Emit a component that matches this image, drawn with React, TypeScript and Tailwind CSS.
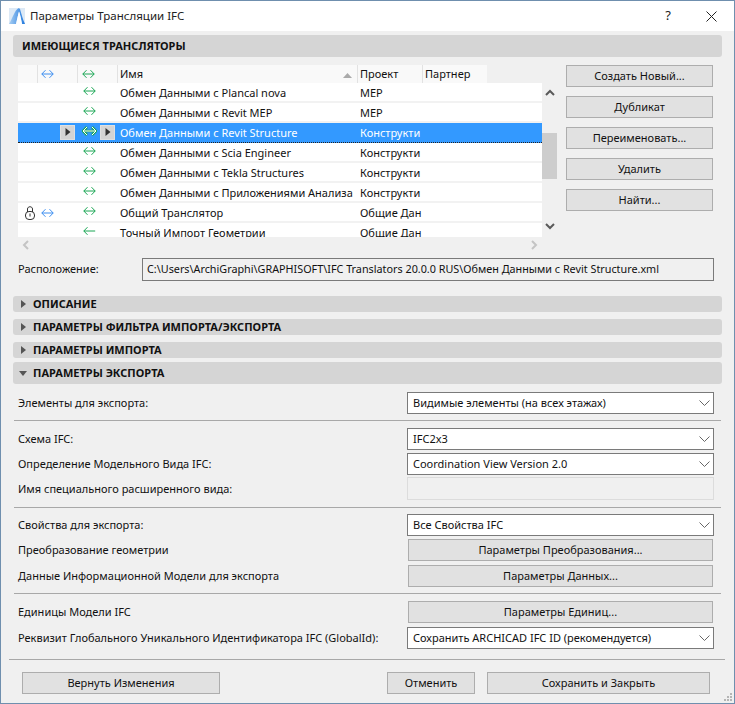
import React from "react";

const font = { fontFamily: '"Noto Sans", "Liberation Sans", sans-serif' };

function Arrow({ color, kind = "both" }: { color: string; kind?: "both" | "left" }) {
  return (
    <svg width="13" height="10" viewBox="0 0 13 10" fill="none" stroke={color} strokeWidth="1">
      {kind === "both" ? (
        <path d="M0.8 5H12.2M4.5 1.2L0.8 5L4.5 8.8M8.5 1.2L12.2 5L8.5 8.8" />
      ) : (
        <path d="M0.8 5H12.2M4.5 1.2L0.8 5L4.5 8.8" />
      )}
    </svg>
  );
}

function SelectedArrow() {
  return (
    <svg width="15" height="12" viewBox="0 0 15 12" fill="none">
      <path d="M1 6H14M5 2L1 6L5 10M10 2L14 6L10 10" stroke="#1aa654" strokeWidth="2.6" />
      <path d="M1 6H14M5 2L1 6L5 10M10 2L14 6L10 10" stroke="#ffffff" strokeWidth="1" />
    </svg>
  );
}

function Lock() {
  return (
    <svg width="10" height="14" viewBox="0 0 10 14" fill="none" stroke="#333" strokeWidth="1">
      <path d="M2.5 6V3C2.5 0 7.5 0 7.5 3V6" />
      <rect x="0.5" y="5.5" width="9" height="8" rx="3.5" />
      <path d="M5 7.5V10.5" />
    </svg>
  );
}

function Play() {
  return (
    <div className="w-[15px] h-[15px] border border-[#e0e0e0] bg-[#d4d4d4] flex items-center justify-center">
      <svg width="6" height="8" viewBox="0 0 6 8"><path d="M0.5 0L5.5 4L0.5 8Z" fill="#333" /></svg>
    </div>
  );
}

function Chevron({ dir }: { dir: "up" | "down" | "left" | "right" }) {
  const d = {
    up: "M1 6L5 2L9 6",
    down: "M1 2L5 6L9 2",
    left: "M6 1L2 5L6 9",
    right: "M2 1L6 5L2 9",
  }[dir];
  const light = dir === "left" || dir === "right";
  return (
    <svg width={light ? 8 : 10} height={light ? 10 : 8} viewBox={light ? "0 0 8 10" : "0 0 10 8"} fill="none" stroke={light ? "#c4c4c4" : "#5a5a5a"} strokeWidth="2">
      <path d={d} />
    </svg>
  );
}

function Btn({ children, className = "" }: { children: React.ReactNode; className?: string }) {
  return (
    <div className={`border border-[#adadad] bg-[#e1e1e1] flex items-center justify-center text-[11px] text-[#111] ${className}`}>
      {children}
    </div>
  );
}

function Select({ value, className = "" }: { value: string; className?: string }) {
  return (
    <div className={`h-[22px] w-[307px] border border-[#7a7a7a] bg-white flex items-center justify-between pl-[5px] pr-[3px] text-[11px] text-[#111] ${className}`}>
      <span>{value}</span>
      <svg width="11" height="6" viewBox="0 0 11 6" fill="none" stroke="#666" strokeWidth="1"><path d="M0.5 0.5L5.5 5.5L10.5 0.5" /></svg>
    </div>
  );
}

function Section({ title, open = false, big = false, className = "" }: { title: string; open?: boolean; big?: boolean; className?: string }) {
  return (
    <div className={`mx-[12px] bg-[#d5d5d5] rounded-[3px] flex items-center font-bold text-[11px] text-[#111] ${big ? "h-[22px]" : "h-[16px]"} ${className}`}>
      <span className="w-[20px] flex justify-center shrink-0">
        {open ? (
          <svg width="8" height="5" viewBox="0 0 8 5"><path d="M0 0H8L4 5Z" fill="#555" /></svg>
        ) : (
          <svg width="5" height="8" viewBox="0 0 5 8"><path d="M0 0L5 4L0 8Z" fill="#555" /></svg>
        )}
      </span>
      {title}
    </div>
  );
}

function Divider({ className = "" }: { className?: string }) {
  return <div className={`h-px bg-[#a8a8a8] ${className}`} />;
}

const GREEN = "#1aa654";
const BLUE = "#3d8ef0";

const rows = [
  { name: "Обмен Данными с Plancal nova", project: "MEP" },
  { name: "Обмен Данными с Revit MEP", project: "MEP" },
  { name: "Обмен Данными с Revit Structure", project: "Конструкти", selected: true },
  { name: "Обмен Данными с Scia Engineer", project: "Конструкти" },
  { name: "Обмен Данными с Tekla Structures", project: "Конструкти" },
  { name: "Обмен Данными с Приложениями Анализа", project: "Конструкти" },
  { name: "Общий Транслятор", project: "Общие Дан", lock: true },
  { name: "Точный Импорт Геометрии", project: "Общие Дан", left: true },
];

function Row({ r }: { r: (typeof rows)[number] }) {
  return (
    <div
      className={`h-[20px] shrink-0 flex items-center text-[11px] ${
        r.selected
          ? "bg-[#3399ff] text-white pt-[1px] border-b border-dotted border-[#222]"
          : "bg-white text-[#111] pt-[2px] border-b-2 border-[#f2f2f2]"
      }`}
    >
      <span className="w-[20px] flex justify-end pr-[3px]">{r.lock && <Lock />}</span>
      <span className="w-[40px] flex items-center pl-[3px]">
        {r.lock && <Arrow color={BLUE} />}
        {r.selected && <span className="ml-[19px] -translate-y-[1px] block"><Play /></span>}
      </span>
      <span className="w-[20px] flex justify-center -translate-y-[2px] ml-[1px]">
        {r.selected ? <SelectedArrow /> : <Arrow color={GREEN} kind={r.left ? "left" : "both"} />}
      </span>
      <span className="w-[21px] flex justify-start pl-[1px] -translate-y-[1px]">{r.selected && <Play />}</span>
      <span className="w-[238px] whitespace-nowrap">{r.name}</span>
      <span className="w-[184px] pl-[2px] whitespace-nowrap">{r.project}</span>
    </div>
  );
}

function TranslatorList() {
  return (
    <div className="w-[540px] shrink-0 flex flex-col">
      <div className="flex h-[172px]">
        <div className="w-[524px] flex flex-col overflow-hidden">
          <div className="h-[18px] shrink-0 flex text-[11px] text-[#111]">
            <div className="w-[20px] bg-[#f9f9f9] border-r border-[#e2e2e2]" />
            <div className="w-[40px] bg-[#f9f9f9] border-r border-[#e2e2e2] flex items-center pl-[3px]"><Arrow color={BLUE} /></div>
            <div className="w-[40px] bg-[#f9f9f9] border-r border-[#e2e2e2] flex items-center pl-[4px]"><Arrow color={GREEN} /></div>
            <div className="w-[240px] bg-[#f9f9f9] border-r border-[#e2e2e2] flex items-center justify-between pl-[2px] pr-[5px]">
              <span>Имя</span>
              <svg width="9" height="5" viewBox="0 0 9 5" className="mt-[3px]"><path d="M0 5L4.5 0L9 5Z" fill="#aaa" /></svg>
            </div>
            <div className="w-[65px] bg-[#f9f9f9] border-r border-[#e2e2e2] flex items-center pl-[2px]">Проект</div>
            <div className="w-[64px] bg-[#f9f9f9] flex items-center pl-[2px]">Партнер</div>
          </div>
          {rows.map((r) => (
            <Row key={r.name} r={r} />
          ))}
        </div>
        <div className="w-[15px] flex flex-col items-center justify-between pt-[24px] pb-[7px] relative">
          <Chevron dir="up" />
          <div className="absolute left-0 top-[68px] w-[15px] h-[46px] bg-[#cdcdcd]" />
          <Chevron dir="down" />
        </div>
      </div>
      <div className="h-[15px] w-[524px] flex items-center justify-between px-[4px]">
        <Chevron dir="left" />
        <Chevron dir="right" />
      </div>
    </div>
  );
}

function FormRow({ label, children, className = "" }: { label: string; children: React.ReactNode; className?: string }) {
  return (
    <div className={`flex items-center justify-between pl-[17px] pr-[20px] text-[11px] text-[#111] ${className}`}>
      <span className="whitespace-nowrap">{label}</span>
      {children}
    </div>
  );
}

export default function App() {
  return (
    <div style={font} className="w-[735px] h-[704px] border border-[#6f8fae] bg-[#f0f0f0] flex flex-col overflow-hidden relative">
      <div className="h-[30px] bg-white flex items-center shrink-0">
        <svg width="16" height="16" viewBox="0 0 16 16" className="ml-[8px]">
          <defs>
            <linearGradient id="lg" x1="0" y1="0" x2="1" y2="0">
              <stop offset="0" stopColor="#a9cff3" />
              <stop offset="1" stopColor="#1f78de" />
            </linearGradient>
          </defs>
          <rect width="16" height="16" fill="#dce9f6" />
          <path d="M0 16C3 11 6 2 9 0.5C9.5 0 10.5 0 11 1C12.5 6 14 12 16 16H13C12 11 11 6 10 3.5C9 7 8 12 7 16Z" fill="url(#lg)" />
          <path d="M10 3.5C11 6 12 11 13 16H7C8 12 9 7 10 3.5Z" fill="#fff" />
        </svg>
        <span className="ml-[5px] text-[11.5px] text-[#222]">Параметры Трансляции IFC</span>
        <span className="ml-auto text-[13px] text-[#222] mr-[35px]">?</span>
        <svg width="11" height="11" viewBox="0 0 11 11" fill="none" stroke="#222" strokeWidth="1" className="mr-[17px]"><path d="M0.5 0.5L10.5 10.5M10.5 0.5L0.5 10.5" /></svg>
      </div>

      <Section title="ИМЕЮЩИЕСЯ ТРАНСЛЯТОРЫ" big className="mt-[4px] pl-[9px] shrink-0 [&>span:first-child]:hidden" />

      <div className="flex mt-[8px] pl-[17px] h-[187px] shrink-0">
        <TranslatorList />
        <div className="ml-[8px] w-[147px] flex flex-col gap-[9px]">
          {["Создать Новый...", "Дубликат", "Переименовать...", "Удалить", "Найти..."].map((t) => (
            <Btn key={t} className="h-[22px]">{t}</Btn>
          ))}
        </div>
      </div>

      <div className="flex items-center mt-[6px] pl-[17px] h-[23px] text-[11px] text-[#111] shrink-0">
        <span className="w-[124px]">Расположение:</span>
        <div className="w-[572px] h-[23px] border border-[#7a7a7a] flex items-center pl-[4px] whitespace-nowrap overflow-hidden text-[10.8px]">
          C:\Users\ArchiGraphi\GRAPHISOFT\IFC Translators 20.0.0 RUS\Обмен Данными с Revit Structure.xml
        </div>
      </div>

      <Section title="ОПИСАНИЕ" className="mt-[15px] shrink-0" />
      <Section title="ПАРАМЕТРЫ ФИЛЬТРА ИМПОРТА/ЭКСПОРТА" className="mt-[7px] shrink-0" />
      <Section title="ПАРАМЕТРЫ ИМПОРТА" className="mt-[7px] shrink-0" />
      <Section title="ПАРАМЕТРЫ ЭКСПОРТА" open big className="mt-[4px] shrink-0" />

      <FormRow label="Элементы для экспорта:" className="mt-[8px] shrink-0">
        <Select value="Видимые элементы (на всех этажах)" />
      </FormRow>
      <Divider className="mx-[13px] mt-[6px] shrink-0" />
      <FormRow label="Схема IFC:" className="mt-[7px] shrink-0">
        <Select value="IFC2x3" />
      </FormRow>
      <FormRow label="Определение Модельного Вида IFC:" className="mt-[3px] shrink-0">
        <Select value="Coordination View Version 2.0" />
      </FormRow>
      <FormRow label="Имя специального расширенного вида:" className="mt-[2px] shrink-0 [&>span]:mt-[2px]">
        <div className="w-[307px] h-[23px] border border-[#dcdcdc] bg-[#f0f0f0]" />
      </FormRow>
      <Divider className="mx-[13px] mt-[7px] shrink-0" />
      <FormRow label="Свойства для экспорта:" className="mt-[6px] shrink-0">
        <Select value="Все Свойства IFC" />
      </FormRow>
      <FormRow label="Преобразование геометрии" className="mt-[3px] shrink-0">
        <Btn className="w-[305px] h-[22px] mr-[1px]">Параметры Преобразования...</Btn>
      </FormRow>
      <FormRow label="Данные Информационной Модели для экспорта" className="mt-[4px] shrink-0">
        <Btn className="w-[305px] h-[22px] mr-[1px]">Параметры Данных...</Btn>
      </FormRow>
      <Divider className="mx-[13px] mt-[6px] shrink-0" />
      <FormRow label="Единицы Модели IFC" className="mt-[7px] shrink-0">
        <Btn className="w-[305px] h-[22px] mr-[1px]">Параметры Единиц...</Btn>
      </FormRow>
      <FormRow label="Реквизит Глобального Уникального Идентификатора IFC (GlobalId):" className="mt-[4px] shrink-0">
        <Select value="Сохранить ARCHICAD IFC ID (рекомендуется)" />
      </FormRow>
      <Divider className="ml-[8px] mr-[9px] mt-[10px] shrink-0" />

      <div className="flex mt-[12px] pl-[21px] shrink-0">
        <Btn className="w-[198px] h-[22px]">Вернуть Изменения</Btn>
        <Btn className="w-[88px] h-[22px] ml-[167px]">Отменить</Btn>
        <Btn className="w-[223px] h-[22px] ml-[12px]">Сохранить и Закрыть</Btn>
      </div>

      <svg width="10" height="10" viewBox="0 0 10 10" className="absolute right-[1px] bottom-[1px]" fill="#b5b5b5">
        <rect x="7" y="1" width="2" height="2" />
        <rect x="4" y="4" width="2" height="2" />
        <rect x="7" y="4" width="2" height="2" />
        <rect x="1" y="7" width="2" height="2" />
        <rect x="4" y="7" width="2" height="2" />
        <rect x="7" y="7" width="2" height="2" />
      </svg>
    </div>
  );
}
